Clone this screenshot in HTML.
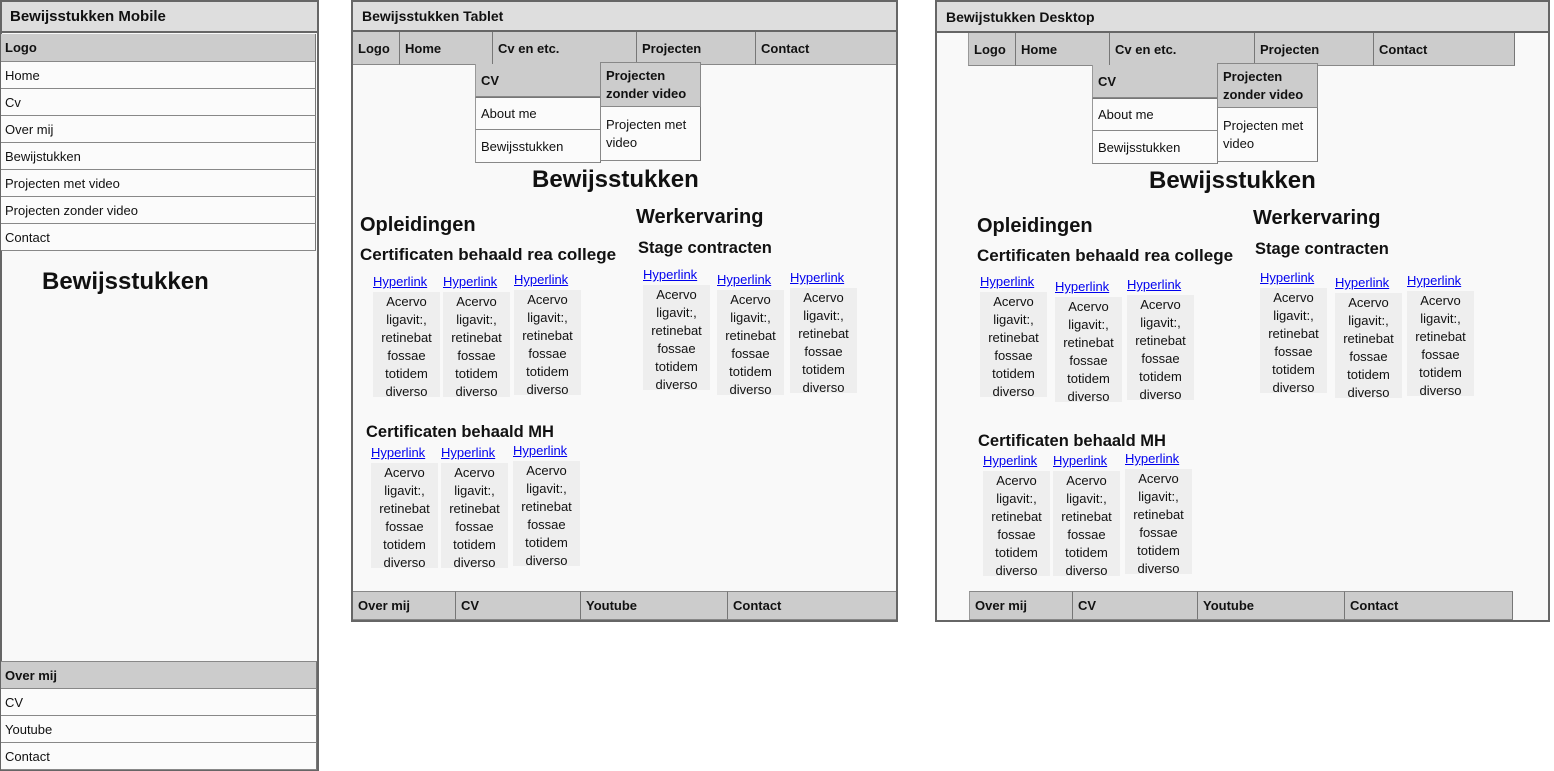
<!DOCTYPE html>
<html><head><meta charset="utf-8"><style>
*{margin:0;padding:0;box-sizing:border-box}
body{width:1554px;height:771px;background:#fff;position:relative;overflow:hidden;font-family:"Liberation Sans",Arial,sans-serif;color:#111}
.fr{position:absolute;background:#f9f9f9;border:2px solid #666}
.tb{position:absolute;background:#dedede;border-bottom:2px solid #666;font-weight:bold;font-size:14px;padding-left:9px}
.cell{position:absolute;font-size:13px;padding-left:5px;border-right:1px solid #777;border-bottom:1px solid #888;display:flex;align-items:center}
.g{background:#ccc}
.w{background:#fbfbfb}
.b{font-weight:bold}
.c{position:absolute;width:67px;text-align:center}
.c a{display:block;height:17px;line-height:14px;font-size:13px;color:#0000ee;text-decoration:underline;text-align:left}
.c div{background:#eee;height:105px;font-size:13px;line-height:18px;padding-top:1px}
h1{position:absolute;font-size:24px;font-weight:bold;white-space:nowrap}
h2{position:absolute;font-size:20px;font-weight:bold;white-space:nowrap}
h3{position:absolute;font-size:17px;font-weight:bold;white-space:nowrap}
</style></head><body>

<!-- MOBILE -->
<div class="fr" style="left:0;top:0;width:319px;height:771px"></div>
<div class="tb" style="left:2px;top:2px;width:315px;height:31px;line-height:30px;font-size:15px;padding-left:8px">Bewijsstukken Mobile</div>
<div class="cell g b" style="left:1px;top:34px;width:315px;height:28px;padding-left:4px">Logo</div>
<div class="cell w" style="left:1px;top:62px;width:315px;height:27px;padding-left:4px">Home</div>
<div class="cell w" style="left:1px;top:89px;width:315px;height:27px;padding-left:4px">Cv</div>
<div class="cell w" style="left:1px;top:116px;width:315px;height:27px;padding-left:4px">Over mij</div>
<div class="cell w" style="left:1px;top:143px;width:315px;height:27px;padding-left:4px">Bewijstukken</div>
<div class="cell w" style="left:1px;top:170px;width:315px;height:27px;padding-left:4px">Projecten met video</div>
<div class="cell w" style="left:1px;top:197px;width:315px;height:27px;padding-left:4px">Projecten zonder video</div>
<div class="cell w" style="left:1px;top:224px;width:315px;height:27px;padding-left:4px">Contact</div>
<h1 style="left:42px;top:268px">Bewijsstukken</h1>
<div class="cell g b" style="left:1px;top:661px;width:316px;height:28px;border-top:1px solid #888;padding-left:4px">Over mij</div>
<div class="cell w" style="left:1px;top:689px;width:316px;height:27px;padding-left:4px">CV</div>
<div class="cell w" style="left:1px;top:716px;width:316px;height:27px;padding-left:4px">Youtube</div>
<div class="cell w" style="left:1px;top:743px;width:316px;height:27px;padding-left:4px">Contact</div>

<!-- TABLET -->
<div class="fr" style="left:351px;top:0;width:547px;height:622px"></div>
<div class="tb" style="left:353px;top:2px;width:543px;height:30px;line-height:28px">Bewijsstukken Tablet</div>
<div class="cell g b" style="left:353px;top:32px;width:47px;height:33px">Logo</div>
<div class="cell g b" style="left:400px;top:32px;width:93px;height:33px">Home</div>
<div class="cell g b" style="left:493px;top:32px;width:144px;height:33px">Cv en etc.</div>
<div class="cell g b" style="left:637px;top:32px;width:119px;height:33px">Projecten</div>
<div class="cell g b" style="left:756px;top:32px;width:140px;height:33px;border-right:none">Contact</div>
<div class="cell g b" style="left:475px;top:64px;width:126px;height:33px;border-left:1px solid #999">CV</div>
<div class="cell w" style="left:475px;top:97px;width:126px;height:33px;border-left:1px solid #999;border-top:1px solid #777">About me</div>
<div class="cell w" style="left:475px;top:130px;width:126px;height:33px;border-left:1px solid #999">Bewijsstukken</div>
<div class="cell g b" style="left:600px;top:62px;width:101px;height:45px;border:1px solid #888;line-height:18px">Projecten<br>zonder video</div>
<div class="cell w" style="left:600px;top:107px;width:101px;height:54px;border-left:1px solid #888;line-height:18px">Projecten met<br>video</div>
<h1 style="left:532px;top:166px">Bewijsstukken</h1>
<h2 style="left:360px;top:214px">Opleidingen</h2>
<h3 style="left:360px;top:245px">Certificaten behaald rea college</h3>
<h2 style="left:636px;top:206px">Werkervaring</h2>
<h3 style="left:638px;top:239px;font-size:16.5px">Stage contracten</h3>
<h3 style="left:366px;top:423px;font-size:16.5px">Certificaten behaald MH</h3>
<div class="c" style="left:373px;top:275px"><a>Hyperlink</a><div>Acervo ligavit:, retinebat fossae totidem diverso</div></div>
<div class="c" style="left:443px;top:275px"><a>Hyperlink</a><div>Acervo ligavit:, retinebat fossae totidem diverso</div></div>
<div class="c" style="left:514px;top:273px"><a>Hyperlink</a><div>Acervo ligavit:, retinebat fossae totidem diverso</div></div>
<div class="c" style="left:643px;top:268px"><a>Hyperlink</a><div>Acervo ligavit:, retinebat fossae totidem diverso</div></div>
<div class="c" style="left:717px;top:273px"><a>Hyperlink</a><div>Acervo ligavit:, retinebat fossae totidem diverso</div></div>
<div class="c" style="left:790px;top:271px"><a>Hyperlink</a><div>Acervo ligavit:, retinebat fossae totidem diverso</div></div>
<div class="c" style="left:371px;top:446px"><a>Hyperlink</a><div>Acervo ligavit:, retinebat fossae totidem diverso</div></div>
<div class="c" style="left:441px;top:446px"><a>Hyperlink</a><div>Acervo ligavit:, retinebat fossae totidem diverso</div></div>
<div class="c" style="left:513px;top:444px"><a>Hyperlink</a><div>Acervo ligavit:, retinebat fossae totidem diverso</div></div>
<div class="cell g b" style="left:353px;top:591px;width:103px;height:29px;border-top:1px solid #888">Over mij</div>
<div class="cell g b" style="left:456px;top:591px;width:125px;height:29px;border-top:1px solid #888">CV</div>
<div class="cell g b" style="left:581px;top:591px;width:147px;height:29px;border-top:1px solid #888">Youtube</div>
<div class="cell g b" style="left:728px;top:591px;width:168px;height:29px;border-top:1px solid #888;border-right:none">Contact</div>

<!-- DESKTOP -->
<div class="fr" style="left:935px;top:0;width:615px;height:622px"></div>
<div class="tb" style="left:937px;top:2px;width:611px;height:31px;line-height:31px">Bewijstukken Desktop</div>
<div class="cell g b" style="left:968px;top:33px;width:48px;height:33px;border-left:1px solid #999">Logo</div>
<div class="cell g b" style="left:1016px;top:33px;width:94px;height:33px">Home</div>
<div class="cell g b" style="left:1110px;top:33px;width:145px;height:33px">Cv en etc.</div>
<div class="cell g b" style="left:1255px;top:33px;width:119px;height:33px">Projecten</div>
<div class="cell g b" style="left:1374px;top:33px;width:141px;height:33px">Contact</div>
<div class="cell g b" style="left:1092px;top:65px;width:126px;height:33px;border-left:1px solid #999">CV</div>
<div class="cell w" style="left:1092px;top:98px;width:126px;height:33px;border-left:1px solid #999;border-top:1px solid #777">About me</div>
<div class="cell w" style="left:1092px;top:131px;width:126px;height:33px;border-left:1px solid #999">Bewijsstukken</div>
<div class="cell g b" style="left:1217px;top:63px;width:101px;height:45px;border:1px solid #888;line-height:18px">Projecten<br>zonder video</div>
<div class="cell w" style="left:1217px;top:108px;width:101px;height:54px;border-left:1px solid #888;line-height:18px">Projecten met<br>video</div>
<h1 style="left:1149px;top:167px">Bewijsstukken</h1>
<h2 style="left:977px;top:215px">Opleidingen</h2>
<h3 style="left:977px;top:246px">Certificaten behaald rea college</h3>
<h2 style="left:1253px;top:207px">Werkervaring</h2>
<h3 style="left:1255px;top:240px;font-size:16.5px">Stage contracten</h3>
<h3 style="left:978px;top:432px;font-size:16.5px">Certificaten behaald MH</h3>
<div class="c" style="left:980px;top:275px"><a>Hyperlink</a><div>Acervo ligavit:, retinebat fossae totidem diverso</div></div>
<div class="c" style="left:1055px;top:280px"><a>Hyperlink</a><div>Acervo ligavit:, retinebat fossae totidem diverso</div></div>
<div class="c" style="left:1127px;top:278px"><a>Hyperlink</a><div>Acervo ligavit:, retinebat fossae totidem diverso</div></div>
<div class="c" style="left:1260px;top:271px"><a>Hyperlink</a><div>Acervo ligavit:, retinebat fossae totidem diverso</div></div>
<div class="c" style="left:1335px;top:276px"><a>Hyperlink</a><div>Acervo ligavit:, retinebat fossae totidem diverso</div></div>
<div class="c" style="left:1407px;top:274px"><a>Hyperlink</a><div>Acervo ligavit:, retinebat fossae totidem diverso</div></div>
<div class="c" style="left:983px;top:454px"><a>Hyperlink</a><div>Acervo ligavit:, retinebat fossae totidem diverso</div></div>
<div class="c" style="left:1053px;top:454px"><a>Hyperlink</a><div>Acervo ligavit:, retinebat fossae totidem diverso</div></div>
<div class="c" style="left:1125px;top:452px"><a>Hyperlink</a><div>Acervo ligavit:, retinebat fossae totidem diverso</div></div>
<div class="cell g b" style="left:969px;top:591px;width:104px;height:29px;border-top:1px solid #888;border-left:1px solid #999">Over mij</div>
<div class="cell g b" style="left:1073px;top:591px;width:125px;height:29px;border-top:1px solid #888">CV</div>
<div class="cell g b" style="left:1198px;top:591px;width:147px;height:29px;border-top:1px solid #888">Youtube</div>
<div class="cell g b" style="left:1345px;top:591px;width:168px;height:29px;border-top:1px solid #888">Contact</div>

</body></html>
